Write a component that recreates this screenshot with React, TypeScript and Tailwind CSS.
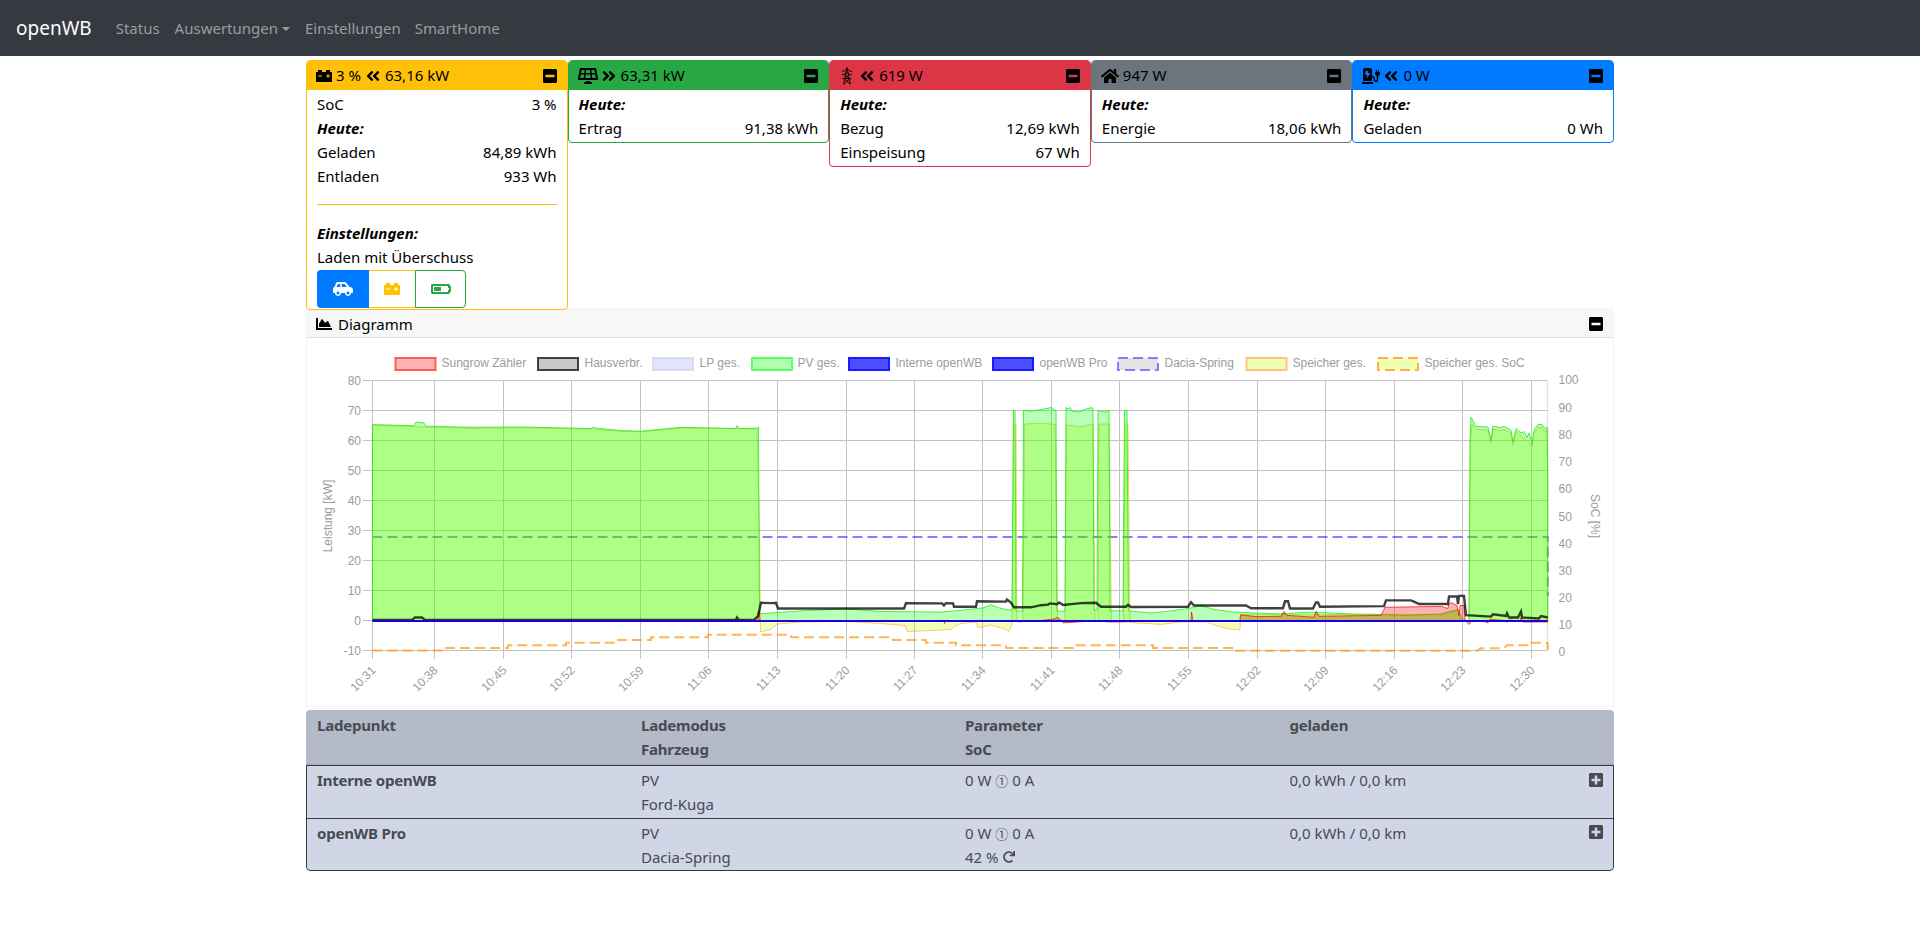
import React from 'react';
import {
  FaAngleDoubleLeft,
  FaAngleDoubleRight,
  FaBatteryHalf,
  FaCarBattery,
  FaCarSide,
  FaChargingStation,
  FaChartArea,
  FaHome,
  FaMinusSquare,
  FaPlusSquare,
  FaRedo,
  FaSolarPanel,
} from 'react-icons/fa';

// chart data: [page x, kW]
type Pt = number[];
const Y = (v: number) => 621.5 - 3 * v;
const line = (arr: Pt[]) => arr.map(([x, v]) => `${x},${Y(v)}`).join(' ');
const area = (arr: Pt[]) => `${arr[0][0]},${Y(0)} ${line(arr)} ${arr[arr.length - 1][0]},${Y(0)}`;

const pv: Pt[] = [
  [371.5, 65.3], [395, 65.1], [413, 64.9], [415, 66.1], [423, 65.9], [424.5, 64.8], [470, 64.4], [520, 64.5], [590, 64], [593, 64.4],
  [596, 64.1], [620, 63.3], [640, 63.1], [680, 64.4], [735, 64], [736, 65], [738, 64], [756, 64.1], [757.5, 64.5], [758.5, 2],
  [760, 2.3], [800, 3.2], [845, 3.9], [880, 3], [940, 2.8], [960, 3.4], [982, 4.2], [990, 5.2], [1000, 4], [1011, 3.4],
  [1012.5, 70], [1014, 70], [1015, 3.2], [1021.5, 3.2], [1022.5, 70], [1030, 69.8], [1040, 70.3], [1047, 70.8], [1050, 71], [1053, 70.2],
  [1055, 70], [1056, 3.2], [1064, 3], [1065, 71], [1067, 70.5], [1069, 71], [1071, 69.8], [1078, 69.5], [1085, 70.5], [1091, 71],
  [1092, 70.5], [1093, 3.5], [1096, 3.5], [1097, 70], [1104, 69.5], [1108, 70], [1109, 3.2], [1122, 3.2], [1123.5, 70], [1126, 70],
  [1127.5, 3.2], [1150, 2.5], [1170, 3.2], [1187, 4], [1200, 5], [1213, 3.7], [1233, 2.8], [1277, 2.2], [1310, 2.8], [1350, 2.2],
  [1407, 1.7], [1440, 2.2], [1457, 3.7], [1462, 0.2], [1468, 0], [1469, 60], [1470, 67.8], [1475, 64.7], [1487, 64.5], [1490, 60.2],
  [1492, 64.8], [1499, 64.3], [1503, 64.7], [1510, 63.5], [1512, 59.5], [1515, 64], [1520, 62.5], [1523, 63], [1526, 61], [1528, 62.5],
  [1531, 59], [1533, 63.5], [1537, 65.3], [1541, 65.3], [1544, 64], [1546, 64.5], [1546.7, 48],
];

const speicher: Pt[] = [
  [371.5, 65], [413, 64.7], [424, 64.4], [470, 64.1], [520, 64.2], [590, 63.8], [620, 63.1], [640, 62.9], [680, 64.1], [756, 63.9],
  [758.5, 30], [759.5, -3.8], [770, -3], [776, -1.2], [800, -0.5], [845, -0.3], [880, -1], [904, -1.7], [906, -3.7], [950, -3],
  [953, -2], [960, -1], [975, -0.5], [977, -2.5], [990, -1.5], [1005, -3], [1008, -3.6], [1011, -1.5], [1012.5, 65.5], [1015, 65.5],
  [1016, -0.5], [1022, -0.5], [1023.5, 65.5], [1040, 65.8], [1054, 65.3], [1056.5, 0], [1064, 0], [1065.5, 65.5], [1068, 65], [1071, 65],
  [1078, 64.5], [1085, 65], [1092, 65.5], [1094, 0], [1097, 0], [1098, 65.5], [1108, 65.5], [1110.5, -0.3], [1122.5, -0.5], [1124, 65.5],
  [1127, 65.5], [1129, -0.5], [1135, -0.8], [1160, -1.3], [1180, -0.5], [1205, -0.4], [1215, -1.7], [1228, -2.8], [1239, -3.2], [1239.5, 2],
  [1300, 1.9], [1380, 2.1], [1440, 1.9], [1457, 3.4], [1459, 0.2], [1468, 0], [1469.5, 60], [1471, 65.5], [1475, 63.8], [1487, 63.5],
  [1490, 59.2], [1492, 63.8], [1499, 63.3], [1503, 63.7], [1510, 62.5], [1512, 58.5], [1515, 63], [1520, 61.5], [1526, 60], [1531, 58],
  [1533, 62.5], [1537, 64.3], [1541, 64.3], [1544, 63], [1546.7, 63.5], [1546.7, 0],
];

const sungrow: Pt[] = [
  [371.5, -0.1], [600, -0.1], [700, 0], [735, 0.1], [756, 0], [758, 3], [759, 0], [776, -0.2], [777, 0], [943, -0.2],
  [943.5, -1], [944, 0], [1040, 0], [1053, 0.5], [1056, 1], [1059, 0.5], [1062, -0.8], [1090, -0.2], [1095, -0.2], [1110, -0.5],
  [1190, 0], [1190.5, 2.8], [1192, 0], [1239, 0], [1239.5, 1.9], [1255, 1.3], [1280, 1.4], [1283, 3], [1286, 1.7], [1313, 1.1],
  [1315, 3], [1318, 1.4], [1380, 1.7], [1384, 4.4], [1440, 4.7], [1447, 4], [1447.5, 5.2], [1450, 6], [1456, 5], [1458, 1.6],
  [1459, 5], [1463, 5], [1464, 0], [1468, -1.3], [1471, 0], [1483, -0.2], [1487, -0.8], [1489, 0.4], [1504, 0], [1506, -0.6],
  [1509, 0.2], [1518, -0.4], [1520, 0.8], [1522, -0.5], [1530, -0.5], [1546.7, -0.5],
];

const haus: Pt[] = [
  [371.5, 0.2], [411, 0.2], [414, 1], [421, 1], [424, 0.2], [730, 0.2], [735, 0.2], [736, 1], [738, 0.2], [753, 0.2],
  [757, 1.5], [760, 5.9], [771, 5.8], [775, 5.9], [777, 4], [845, 4], [903, 4], [905, 5.8], [941, 5.7], [943, 5], [945, 5.8],
  [952, 5.7], [953, 4.6], [975, 4.6], [976, 6.4], [1005, 6.3], [1006, 7], [1010, 6], [1013, 4.4], [1030, 4.4], [1040, 5.1],
  [1047, 5.3], [1049, 5.7], [1056, 5.4], [1058, 6], [1062, 5.2], [1080, 5.8], [1095, 5.9], [1100, 4.6], [1125, 4.6], [1127, 5.2],
  [1130, 4.5], [1187, 4.6], [1190, 6.1], [1193, 5], [1200, 5], [1245, 5], [1250, 4.1], [1282, 4.1], [1284, 6.4], [1287, 6.4],
  [1289, 4], [1312, 4], [1315, 6], [1317, 6], [1319, 4.6], [1383, 4.8], [1385, 6.7], [1410, 6.7], [1414, 6.1], [1418, 5.5], [1447, 5.5],
  [1448, 8], [1456, 8], [1457, 5.5], [1458, 8.2], [1463, 8.2], [1465, 1.8], [1490, 1.3], [1492, 2.1], [1505, 1.5], [1506, 2.4],
  [1508, 1], [1517, 1], [1520, 3], [1521, 1], [1538, 0.7], [1540, 1.5], [1546.7, 1],
];

// SoC lines in page px
const socPath =
  'M371.5 651.5H445V649H507V646.3H565V643.7H615V641H650V638.3H707V635.7H790V638.3H892V641H925V643.7H955V646.3H1005V649H1072V646.3H1152V649H1234V651.7H1476L1480 649.3H1503L1506 646.3H1530V643.7H1541.5L1546.7 644V651';
const daciaPath = 'M371.5 538H1546.7V597';

const xTicks = [
  [371.5, '10:31'], [433.5, '10:38'], [502.5, '10:45'], [570.5, '10:52'], [639.5, '10:59'], [707.5, '11:06'],
  [776.5, '11:13'], [845.5, '11:20'], [913.5, '11:27'], [981.5, '11:34'], [1050.5, '11:41'], [1118.5, '11:48'],
  [1187.5, '11:55'], [1256.5, '12:02'], [1324.5, '12:09'], [1393.5, '12:16'], [1461.5, '12:23'], [1530.5, '12:30'],
] as [number, string][];

const leftTicks = [80, 70, 60, 50, 40, 30, 20, 10, 0, -10];
const rightTicks: [number, number][] = [
  [100, 381], [90, 409], [80, 436], [70, 463], [60, 490], [50, 517.5], [40, 544.5], [30, 571.5], [20, 598.5], [10, 625.5], [0, 652.5],
];

const legend = [
  { x: 394.5, tx: 440.5, label: 'Sungrow Zähler', fill: '#ffb2b2', stroke: '#ff5c5c' },
  { x: 537, tx: 583.5, label: 'Hausverbr.', fill: '#c8c8c8', stroke: '#404040' },
  { x: 652, tx: 698.5, label: 'LP ges.', fill: '#e3e3fd', stroke: '#dcdcf0' },
  { x: 751, tx: 796.5, label: 'PV ges.', fill: '#b0ffb0', stroke: '#5cff5c' },
  { x: 848, tx: 894.5, label: 'Interne openWB', fill: '#4d4dff', stroke: '#1a1aff' },
  { x: 992, tx: 1038.5, label: 'openWB Pro', fill: '#4d4dff', stroke: '#1a1aff' },
  { x: 1117, tx: 1163.5, label: 'Dacia-Spring', fill: '#e3e3e3', stroke: '#7f7fff', dash: true },
  { x: 1245.5, tx: 1291.5, label: 'Speicher ges.', fill: '#eeffb2', stroke: '#ffc580' },
  { x: 1377, tx: 1423.5, label: 'Speicher ges. SoC', fill: '#eeffb2', stroke: '#ffb040', dash: true },
];

const Chart = () => (
  <svg viewBox="306 338 1308 370" className="block w-[1308px] h-[370px]">
    {/* legend */}
    {legend.map((l) => (
      <g key={l.label}>
        <rect x={l.x} y={359} width={40} height={12} fill={l.fill} stroke={l.stroke} strokeWidth={2} strokeDasharray={l.dash ? '10 5' : undefined} />
        <text x={l.tx} y={368} fontFamily="Liberation Sans" fontSize={12} fill="#9c9c9c">{l.label}</text>
      </g>
    ))}

    {/* grid */}
    {leftTicks.map((t, i) => (
      <line key={t} x1={362} x2={1546.7} y1={381.5 + 30 * i} y2={381.5 + 30 * i} stroke="#c2c2c2" strokeWidth={1} />
    ))}
    {xTicks.map(([x]) => (
      <line key={x} x1={x} x2={x} y1={381.5} y2={660} stroke="#c2c2c2" strokeWidth={1} />
    ))}
    <line x1={1546.7} x2={1546.7} y1={381.5} y2={651.5} stroke="#d8d8d8" strokeWidth={1} />

    {/* axis labels */}
    {leftTicks.map((t, i) => (
      <text key={t} x={360} y={385.5 + 30 * i} textAnchor="end" fontFamily="Liberation Sans" fontSize={12} fill="#9c9c9c">{t}</text>
    ))}
    {rightTicks.map(([t, y]) => (
      <text key={t} x={1557.5} y={y + 4} fontFamily="Liberation Sans" fontSize={12} fill="#9c9c9c">{t}</text>
    ))}
    {xTicks.map(([x, label]) => (
      <text key={label} x={x + 4} y={672} textAnchor="end" transform={`rotate(-45 ${x + 4} 672)`} fontFamily="Liberation Sans" fontSize={12} fill="#9c9c9c">{label}</text>
    ))}
    <text x={328} y={517} textAnchor="middle" transform="rotate(-90 328 517)" dominantBaseline="middle" fontFamily="Liberation Sans" fontSize={12} fill="#9c9c9c">Leistung [kW]</text>
    <text x={1593} y={517} textAnchor="middle" transform="rotate(90 1593 517)" dominantBaseline="middle" fontFamily="Liberation Sans" fontSize={12} fill="#9c9c9c">SoC [%]</text>

    {/* series */}
    <path d={daciaPath} fill="none" stroke="#0000ff" strokeOpacity={0.5} strokeWidth={2} strokeDasharray="10 5" />
    <path d={socPath} fill="none" stroke="#ff9c1a" strokeOpacity={0.75} strokeWidth={2} strokeDasharray="10 5" />
    <polygon points={area(speicher)} fill="#c8ff00" fillOpacity={0.27} stroke="#ff9900" strokeOpacity={0.5} strokeWidth={1} />
    <polygon points={area(pv)} fill="#00ff00" fillOpacity={0.28} stroke="#00ee00" strokeOpacity={0.7} strokeWidth={1} />
    <polygon points={area(sungrow)} fill="#ff0000" fillOpacity={0.3} stroke="#ff0000" strokeOpacity={0.7} strokeWidth={1} />
    <polyline points={line(haus)} fill="none" stroke="#000000" strokeOpacity={0.75} strokeWidth={2.4} />
    <line x1={371.5} x2={1546.7} y1={622} y2={622} stroke="#1a00e0" strokeWidth={2} />
  </svg>
);

// lattice tower, not in the icon packs
const Pylon = () => (
  <svg viewBox="0 0 12 18" className="w-[12px] h-[18px] ml-[2px] mr-[6px]" fill="none" stroke="black" strokeWidth={0.9}>
    <path d="M6 0.5 L2.6 17.5 M6 0.5 L9.4 17.5 M1 4.5 Q4 4 6 2 Q8 4 11 4.5 M1 8 Q4 7.5 6 5.5 Q8 7.5 11 8 M1.5 11.5 H10.5 M4.4 8 L7.8 11.5 M7.6 8 L4.2 11.5 M3.6 12 L9 17 M8.4 12 L3 17" />
  </svg>
);

const Row = ({ left, right }: { left: string; right: string }) => (
  <div className="flex justify-between h-6 leading-6">
    <span>{left}</span>
    <span>{right}</span>
  </div>
);

const Heute = () => <div className="h-6 leading-6 font-bold italic">Heute:</div>;

interface CardProps {
  bg: string;
  border: string;
  head: React.ReactNode;
  children: React.ReactNode;
}

const Card = ({ bg, border, head, children }: CardProps) => (
  <div className={`self-start border rounded-[4px] bg-white overflow-hidden ${border}`}>
    <div className={`h-[29px] flex items-center justify-between pl-[9px] pr-[9px] ${bg}`}>
      <div className="flex items-center">{head}</div>
      <FaMinusSquare size={16} className="text-black" />
    </div>
    <div className="px-[10px] pt-[2px] pb-[2px]">{children}</div>
  </div>
);

const cellHead = 'h-6 leading-6 font-bold tracking-[-0.2px]';
const cell = 'h-6 leading-6';

export default function App() {
  return (
    <div className="min-h-[927px] bg-white text-black text-[15px] font-['Noto_Sans','Noto_Sans_CJK_SC',sans-serif]">
      <nav className="h-14 bg-[#343a40] flex items-center pl-4">
        <span className="text-white text-[19px] mr-[24px]">openWB</span>
        <div className="flex items-center gap-[15px] mt-px text-[#9a9da0]">
          <span>Status</span>
          <span className="flex items-center">
            Auswertungen
            <span className="ml-[4px] w-0 h-0 border-x-[4px] border-x-transparent border-t-[4px] border-t-[#9a9da0]" />
          </span>
          <span>Einstellungen</span>
          <span className="-ml-px">SmartHome</span>
        </div>
      </nav>

      <div className="w-[1308px] mx-auto mt-1">
        <div className="grid grid-cols-5 h-[248px]">
          <Card
            bg="bg-[#ffc107]"
            border="border-[#ffc107]"
            head={
              <>
                <FaCarBattery size={16} className="mr-1" />
                3 %
                <FaAngleDoubleLeft size={16} className="mx-[4px]" />
                63,16 kW
              </>
            }
          >
            <Row left="SoC" right="3 %" />
            <Heute />
            <Row left="Geladen" right="84,89 kWh" />
            <Row left="Entladen" right="933 Wh" />
            <hr className="border-t border-[#ffc107] mt-[16px] mb-[16px]" />
            <div className="h-6 leading-6 font-bold italic">Einstellungen:</div>
            <div className="h-6 leading-6">Laden mit Überschuss</div>
            <div className="flex h-[38px] mt-px -mb-px">
              <div className="w-[52px] bg-[#007bff] rounded-l-[4px] flex items-center justify-center">
                <FaCarSide size={20} className="text-white" />
              </div>
              <div className="w-[46px] border-y border-[#ffc107] flex items-center justify-center">
                <FaCarBattery size={16} className="text-[#ffc107]" />
              </div>
              <div className="w-[51px] border border-[#28a745] rounded-r-[4px] flex items-center justify-center">
                <FaBatteryHalf size={20} className="text-[#28a745]" />
              </div>
            </div>
          </Card>

          <Card
            bg="bg-[#28a745]"
            border="border-[#28a745]"
            head={
              <>
                <FaSolarPanel size={16} className="w-5 mr-[3px]" />
                <FaAngleDoubleRight size={16} className="mr-[4px]" />
                63,31 kW
              </>
            }
          >
            <Heute />
            <Row left="Ertrag" right="91,38 kWh" />
          </Card>

          <Card
            bg="bg-[#dc3545]"
            border="border-[#dc3545]"
            head={
              <>
                <Pylon />
                <FaAngleDoubleLeft size={16} className="mr-[4px]" />
                619 W
              </>
            }
          >
            <Heute />
            <Row left="Bezug" right="12,69 kWh" />
            <Row left="Einspeisung" right="67 Wh" />
          </Card>

          <Card
            bg="bg-[#6c757d]"
            border="border-[#6c757d]"
            head={
              <>
                <FaHome size={16} className="w-[18px] mr-[4px]" />
                947 W
              </>
            }
          >
            <Heute />
            <Row left="Energie" right="18,06 kWh" />
          </Card>

          <Card
            bg="bg-[#007bff]"
            border="border-[#007bff]"
            head={
              <>
                <FaChargingStation size={16} className="w-[18px] mr-[3px]" />
                <FaAngleDoubleLeft size={16} className="mr-[4px]" />
                0 W
              </>
            }
          >
            <Heute />
            <Row left="Geladen" right="0 Wh" />
          </Card>
        </div>

        <div className="h-[30px] bg-[#f7f7f7] border-b border-[#dfdfdf] flex items-center justify-between pl-[10px] pr-[10px] pt-[3px]">
          <div className="flex items-center">
            <FaChartArea size={16} className="mr-[6px]" />
            Diagramm
          </div>
          <FaMinusSquare size={16} />
        </div>
        <div className="border-x border-b border-[#f4f4f4] h-[370px] -mt-px box-border">
          <Chart />
        </div>

        <div className="mt-[3px] text-[#474b52] rounded-[4px] overflow-hidden">
          <div className="grid grid-cols-[324px_324px_324.5px_1fr] bg-[#b5bac8] pl-[11px] pt-[3px] pb-[3px] border-b border-[#a6abb8]">
            <div className={cellHead}>Ladepunkt</div>
            <div>
              <div className={cellHead}>Lademodus</div>
              <div className={cellHead}>Fahrzeug</div>
            </div>
            <div>
              <div className={cellHead}>Parameter</div>
              <div className={cellHead}>SoC</div>
            </div>
            <div className={cellHead}>geladen</div>
          </div>

          <div className="bg-[#d0d6e6] border border-[#343a40] rounded-b-[4px]">
            <div className="grid grid-cols-[324px_324px_324.5px_1fr] h-[52px] pl-[10px] pt-[2px]">
              <div className={cellHead}>Interne openWB</div>
              <div>
                <div className={cell}>PV</div>
                <div className={cell}>Ford-Kuga</div>
              </div>
              <div className={cell}>0 W <span className="text-[13px]">①</span> 0 A</div>
              <div className="flex justify-between pr-[9px]">
                <span className={cell}>0,0 kWh / 0,0 km</span>
                <FaPlusSquare size={16} className="mt-[4px]" />
              </div>
            </div>
            <div className="grid grid-cols-[324px_324px_324.5px_1fr] h-[52px] pl-[10px] pt-[2px] border-t border-[#343a40]">
              <div className={cellHead}>openWB Pro</div>
              <div>
                <div className={cell}>PV</div>
                <div className={cell}>Dacia-Spring</div>
              </div>
              <div>
                <div className={cell}>0 W <span className="text-[13px]">①</span> 0 A</div>
                <div className={`${cell} flex items-center`}>
                  42 %
                  <FaRedo size={12} className="ml-1" />
                </div>
              </div>
              <div className="flex justify-between pr-[9px]">
                <span className={cell}>0,0 kWh / 0,0 km</span>
                <FaPlusSquare size={16} className="mt-[3px]" />
              </div>
            </div>
          </div>
        </div>
      </div>
    </div>
  );
}
